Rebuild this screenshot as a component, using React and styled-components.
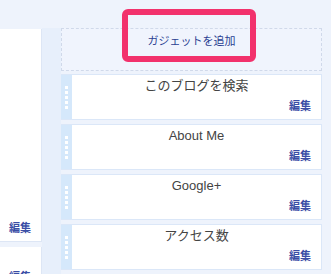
import React from "react";
import styled, { createGlobalStyle } from "styled-components";

const GlobalStyle = createGlobalStyle`
  html, body {
    margin: 0;
    padding: 0;
    background: #eef3fc;
    font-family: "Liberation Sans", "Noto Sans CJK JP", sans-serif;
    overflow: hidden;
  }
`;

const Page = styled.div`
  width: 331px;
  height: 274px;
  padding-top: 28px;
  box-sizing: border-box;
  overflow: hidden;
`;

const Columns = styled.div`
  display: flex;
  align-items: flex-start;
`;

const MainColumn = styled.div`
  width: 42px;
  display: flex;
  flex-direction: column;
  gap: 5px;
  padding-top: 1px;
`;

const MainPanel = styled.div`
  height: ${(p) => p.height}px;
  background: #ffffff;
  border-right: 1px solid #dde6f5;
  border-bottom: 1px solid #dde6f5;
  box-sizing: border-box;
  display: flex;
  flex-direction: column;
  justify-content: flex-end;
  align-items: flex-end;
  padding: 0 10px 7px 0;
`;

const Gutter = styled.div`
  width: 19px;
  height: 246px;
  background: #e7effb;
`;

const Sidebar = styled.div`
  position: relative;
  width: 261px;
  display: flex;
  flex-direction: column;
  gap: 3px;
`;

const AddGadget = styled.div`
  height: 43px;
  border: 1px dashed #d0d9ea;
  box-sizing: border-box;
  background: #f0f4fd;
  display: flex;
  justify-content: center;
  padding-top: 3px;
  font-family: "Noto Sans CJK JP", sans-serif;
  font-size: 11px;
  line-height: 16px;
  color: #2b3f92;
`;

const Highlight = styled.div`
  position: absolute;
  left: 61px;
  top: -19px;
  width: 134px;
  height: 53px;
  border: 6px solid #f2316c;
  border-radius: 6px;
  box-sizing: border-box;
  pointer-events: none;
`;

const WidgetList = styled.div`
  display: flex;
  flex-direction: column;
  gap: 4px;
`;

const Widget = styled.div`
  display: flex;
  height: 46px;
  border: 1px solid #dbe7f8;
  border-left: none;
  box-sizing: border-box;
  background: #ffffff;
`;

const Handle = styled.div`
  width: 11px;
  background: #d5e8fb;
  display: flex;
  flex-direction: column;
  align-items: flex-start;
  justify-content: center;
  gap: 2px;
  padding-left: 4px;
  box-sizing: border-box;
`;

const Dot = styled.span`
  width: 3px;
  height: 3px;
  background: #ffffff;
`;

const WidgetBody = styled.div`
  flex: 1;
  display: flex;
  flex-direction: column;
  padding: 3px 10px 0 0;
`;

const WidgetTitle = styled.div`
  text-align: center;
  font-size: 13px;
  line-height: 16px;
  color: #444;
  padding-left: 10px;
`;

const EditLink = styled.a`
  align-self: flex-end;
  margin-top: 4px;
  font-family: "Noto Sans CJK JP", sans-serif;
  font-size: 11px;
  line-height: 14px;
  font-weight: bold;
  color: #3b4ea6;
  text-decoration: none;
`;

const widgets = ["このブログを検索", "About Me", "Google+", "アクセス数"];

export default function App() {
  return (
    <>
      <GlobalStyle />
      <Page>
        <Columns>
          <MainColumn>
            <MainPanel height={213}>
              <EditLink>編集</EditLink>
            </MainPanel>
            <MainPanel height={44}>
              <EditLink>編集</EditLink>
            </MainPanel>
          </MainColumn>
          <Gutter />
          <Sidebar>
            <AddGadget>ガジェットを追加</AddGadget>
            <Highlight />
            <WidgetList>
              {widgets.map((w) => (
                <Widget key={w}>
                  <Handle>
                    {[0, 1, 2, 3, 4].map((i) => (
                      <Dot key={i} />
                    ))}
                  </Handle>
                  <WidgetBody>
                    <WidgetTitle>{w}</WidgetTitle>
                    <EditLink>編集</EditLink>
                  </WidgetBody>
                </Widget>
              ))}
            </WidgetList>
          </Sidebar>
        </Columns>
      </Page>
    </>
  );
}
